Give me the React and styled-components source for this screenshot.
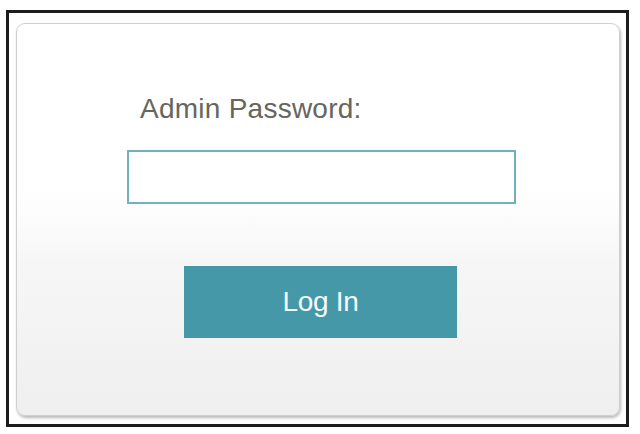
import React from "react";
import styled, { createGlobalStyle } from "styled-components";

const Global = createGlobalStyle`
  html, body { margin: 0; padding: 0; background: #ffffff; }
  body { font-family: "Liberation Sans", Arial, sans-serif; }
`;

const Frame = styled.div`
  box-sizing: border-box;
  margin: 10px 0 0 6px;
  width: 623px;
  height: 417px;
  border: 3px solid #1c1c1c;
  background: #ffffff;
  padding: 10px 6px 8px 7px;
  display: flex;
`;

const Card = styled.div`
  box-sizing: border-box;
  flex: 1;
  border: 1px solid #cfcfcf;
  border-radius: 9px;
  box-shadow: 1px 2px 3px rgba(0, 0, 0, 0.28);
  background: linear-gradient(180deg, #ffffff 0%, #ffffff 42%, #f6f6f6 62%, #efefef 100%);
  padding: 69px 0 0 110px;
  display: flex;
  flex-direction: column;
  align-items: flex-start;
`;

const Label = styled.label`
  margin-left: 13px;
  font-size: 28px;
  line-height: 32px;
  color: #66665e;
  letter-spacing: 0.25px;
`;

const Input = styled.input`
  box-sizing: border-box;
  margin-top: 25px;
  width: 389px;
  height: 54px;
  border: 2px solid #70b1bd;
  background: #ffffff;
  outline: none;
  padding: 0 8px;
  font-size: 20px;
  font-family: inherit;
`;

const Button = styled.button`
  box-sizing: border-box;
  margin-top: 62px;
  margin-left: 57px;
  width: 273px;
  height: 72px;
  border: none;
  background: #4598a8;
  color: #f4fbfc;
  font-family: inherit;
  font-size: 28px;
  letter-spacing: -0.3px;
  cursor: pointer;
  padding: 0;
`;

export default function App() {
  return (
    <>
      <Global />
      <Frame>
        <Card>
          <Label htmlFor="pw">Admin Password:</Label>
          <Input id="pw" type="password" />
          <Button>Log In</Button>
        </Card>
      </Frame>
    </>
  );
}
